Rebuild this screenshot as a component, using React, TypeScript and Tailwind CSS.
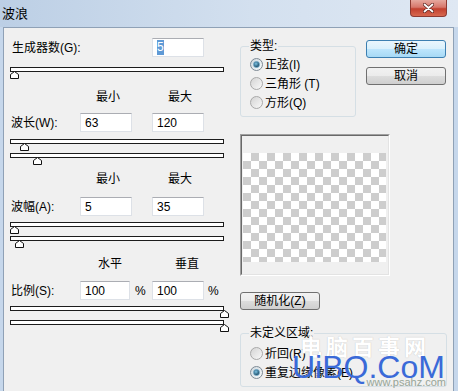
import React from 'react';

// Photoshop "波浪" filter dialog, Windows 7 look
const Thumb: React.FC<{ left: number }> = ({ left }) => (
  <svg className="absolute top-[3px]" style={{ left }} width="9" height="8" viewBox="0 0 9 8">
    <path d="M0.5 7.5V3.5L4.5 0.5L8.5 3.5V7.5Z" fill="#ffffff" stroke="#111111" />
  </svg>
);

const Slider: React.FC<{ pos: number; className?: string }> = ({ pos, className = '' }) => (
  <div className={`relative h-[5px] w-[214px] border border-[#1c1c1c] bg-white ${className}`}>
    <Thumb left={pos - 1} />
  </div>
);

const Field: React.FC<{ value: string; selected?: boolean; className?: string }> = ({ value, selected, className = 'w-[52px]' }) => (
  <div className={`flex h-[19px] items-center border border-[#dde1e7] border-t-[#abadb3] bg-white pl-[4px] ${className}`}>
    {selected ? <span className="bg-[#5f9ad6] leading-[15px] text-white">{value}</span> : <span>{value}</span>}
  </div>
);

const Radio: React.FC<{ label: string; checked?: boolean }> = ({ label, checked }) => (
  <div className="flex h-[19px] items-center">
    <span
      className={`ml-[9px] flex h-[13px] w-[13px] items-center justify-center rounded-full border ${
        checked ? 'border-[#7e8a95] bg-[linear-gradient(135deg,#cfd8de,#f8fbfc)]' : 'border-[#a9a9a9] bg-[linear-gradient(135deg,#d4d4d4,#f9f9f9)]'
      }`}
    >
      {checked && <span className="h-[7px] w-[7px] rounded-full border border-[#5d97b8] bg-[radial-gradient(circle_at_40%_35%,#7cc3e4,#1f4e68_75%)]" />}
    </span>
    <span className="ml-[2px]">{label}</span>
  </div>
);

const Btn: React.FC<{ children: React.ReactNode; primary?: boolean; className?: string }> = ({ children, primary, className = '' }) => (
  <button
    className={`flex h-[18px] w-[80px] items-center justify-center rounded-[3px] border leading-none ${
      primary
        ? 'border-[#3c7fb1] bg-[linear-gradient(#eaf6fd_0%,#d9f0fc_50%,#bee6fd_50%,#a7d9f5_100%)]'
        : 'border-[#707070] bg-[linear-gradient(#f2f2f2_0%,#ebebeb_50%,#dddddd_50%,#cfcfcf_100%)]'
    } ${className}`}
  >
    {children}
  </button>
);

const Header: React.FC<{ a: string; b: string; pl: string; gap: string; className?: string }> = ({ a, b, pl, gap, className = '' }) => (
  <div className={`flex h-[16px] items-center ${pl} ${className}`}>
    <span>{a}</span>
    <span className={gap}>{b}</span>
  </div>
);

const App: React.FC = () => {
  return (
    <div className="relative flex h-[391px] w-[458px] flex-col overflow-hidden bg-[#c6d7eb] font-['Liberation_Sans','Noto_Sans_CJK_SC',sans-serif] text-[12px] text-black">
      {/* caption */}
      <div className="relative flex h-[27px] shrink-0 items-center bg-[linear-gradient(90deg,#bccfe5,#d3e0ef_55%,#dfe8f3)] pl-[2px]">
        <span className="text-[13px]">波浪</span>
        <div className="absolute left-[410px] top-0 flex h-[17px] w-[37px] items-center justify-center rounded-b-[4px] border border-t-0 border-[#8d3a32] bg-[linear-gradient(#e6a89e,#d7776b_45%,#c2402f_55%,#d7684f)]">
          <svg width="11" height="10" viewBox="0 0 11 10">
            <path d="M1.5 1.5L9.5 8.5M9.5 1.5L1.5 8.5" stroke="#5a2520" strokeWidth="3.2" strokeLinecap="round" />
            <path d="M1.5 1.5L9.5 8.5M9.5 1.5L1.5 8.5" stroke="#ffffff" strokeWidth="1.8" strokeLinecap="round" />
          </svg>
        </div>
      </div>

      {/* client area */}
      <div className="ml-[3px] mr-[4px] flex flex-1 border-l border-r border-t border-[#8fa1b6] bg-[#f0f0f0]">
        {/* left column: parameters */}
        <div className="flex w-[232px] shrink-0 flex-col pl-[6px] pt-[10px]">
          <div className="flex h-[19px] items-center">
            <span className="w-[142px] pl-[2px]">生成器数(G):</span>
            <Field value="5" selected />
          </div>
          <Slider pos={0} className="mt-[10px]" />

          <Header a="最小" b="最大" pl="pl-[86px]" gap="ml-[48px]" className="mt-[17px]" />
          <div className="mt-[8px] flex h-[19px] items-center">
            <span className="w-[70px] pl-[1px]">波长(W):</span>
            <Field value="63" />
            <span className="w-[20px]" />
            <Field value="120" />
          </div>
          <Slider pos={10} className="mt-[7px]" />
          <Slider pos={23} className="mt-[9px]" />

          <Header a="最小" b="最大" pl="pl-[86px]" gap="ml-[48px]" className="mt-[13px]" />
          <div className="mt-[10px] flex h-[19px] items-center">
            <span className="w-[70px] pl-[1px]">波幅(A):</span>
            <Field value="5" />
            <span className="w-[20px]" />
            <Field value="35" />
          </div>
          <Slider pos={0} className="mt-[6px]" />
          <Slider pos={5} className="mt-[9px]" />

          <Header a="水平" b="垂直" pl="pl-[88px]" gap="ml-[53px]" className="mt-[15px]" />
          <div className="mt-[9px] flex h-[19px] items-center">
            <span className="w-[70px] pl-[1px]">比例(S):</span>
            <Field value="100" className="w-[50px]" />
            <span className="w-[22px] pl-[5px]">%</span>
            <Field value="100" />
            <span className="ml-[4px]">%</span>
          </div>
          <Slider pos={210} className="mt-[6px]" />
          <Slider pos={210} className="mt-[9px]" />
        </div>

        {/* right column: type, buttons, preview */}
        <div className="flex flex-col pl-[4px]">
          <div className="flex">
            <fieldset className="mt-[11px] w-[116px] shrink-0 rounded-[3px] border border-[#d5dfe5] pb-[4px] pt-[2px]">
              <legend className="ml-[8px] px-[1px] leading-[14px]">类型:</legend>
              <Radio label="正弦(I)" checked />
              <Radio label="三角形 (T)" />
              <Radio label="方形(Q)" />
            </fieldset>
            <div className="ml-[10px] mt-[12px] flex flex-col gap-[9px]">
              <Btn primary>确定</Btn>
              <Btn>取消</Btn>
            </div>
          </div>

          {/* preview */}
          <div className="mt-[17px] h-[142px] w-[150px] border border-b-white border-l-[#a0a0a0] border-r-white border-t-[#a0a0a0]">
            <div className="h-full w-full border border-b-[#e3e3e3] border-l-[#696969] border-r-[#e3e3e3] border-t-[#696969] pl-[1px] pt-[17px]">
              <div className="h-[109px] w-[143px] bg-[conic-gradient(#cdcdcd_25%,#ffffff_0_50%,#cdcdcd_0_75%,#ffffff_0)] bg-size-[16px_16px]" />
            </div>
          </div>

          <Btn className="mt-[16px] w-[79px]">随机化(Z)</Btn>

          <fieldset className="mt-[16px] w-[207px] rounded-[3px] border border-[#d5dfe5] pb-[4px] pt-[4px]">
            <legend className="ml-[8px] px-[1px] leading-[14px]">未定义区域:</legend>
            <Radio label="折回(R)" />
            <Radio label="重复边缘像素(E)" checked />
          </fieldset>
        </div>
      </div>

      {/* site watermark */}
      <span className="absolute left-[300px] top-[334px] text-[22px] font-bold leading-none tracking-[4px] text-white [text-shadow:0_0_1px_#b8b8b8] font-['Noto_Sans_CJK_SC',sans-serif]">
        电脑百事网
      </span>
      <span className="absolute left-[292px] top-[351px] text-[32px] leading-[32px] text-[#3a6ad8] font-['Liberation_Sans',sans-serif]">
        UiBQ.CoM
      </span>
      <span className="absolute right-[12px] top-[376px] text-[11px] leading-[12px] text-[#97a597] font-['Liberation_Sans',sans-serif]">
        www.psahz.com
      </span>
    </div>
  );
};

export default App;
